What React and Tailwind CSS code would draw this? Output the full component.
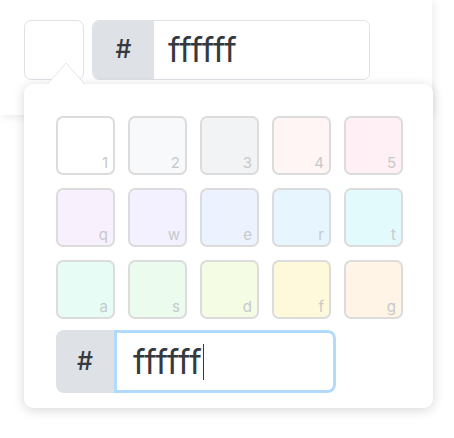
import React from "react";

const swatches = [
  ["#ffffff", "1"], ["#f8f9fa", "2"], ["#f1f3f5", "3"], ["#fff5f5", "4"], ["#fff0f6", "5"],
  ["#f8f0fc", "q"], ["#f3f0ff", "w"], ["#edf2ff", "e"], ["#e7f5ff", "r"], ["#e3fafc", "t"],
  ["#e6fcf5", "a"], ["#ebfbee", "s"], ["#f4fce3", "d"], ["#fff9db", "f"], ["#fff4e6", "g"],
];

export default function App() {
  return (
    <div className="relative w-[454px] h-[438px] bg-white overflow-hidden font-['Inter',sans-serif]">
      <div className="w-[432px] h-[115px] bg-white shadow-[2px_2px_8px_rgba(0,0,0,0.08)] flex items-start gap-[8px] pt-5 pl-6">
        <div className="w-[60px] h-[60px] rounded-[7px] border-[1.5px] border-[#dee2e6] bg-white" />
        <div className="w-[278px] h-[60px] rounded-[7px] border-[1.5px] border-[#dee2e6] flex overflow-hidden">
          <div className="w-[61px] bg-[#dee1e6] flex items-center justify-center text-[25px] font-medium text-[#343a40]">#</div>
          <div className="flex-1 bg-white flex items-center pl-[14px] text-[34px] leading-none text-[#343a40]">ffffff</div>
        </div>
      </div>

      <div className="absolute left-6 top-[84px] w-[409px] h-[324px] rounded-[9px] bg-white shadow-[0_2px_12px_rgba(0,0,0,0.16)] pt-8 pl-8">
        <svg className="absolute left-[23px] top-[-22px]" width="38" height="24" viewBox="0 0 38 24">
          <path d="M0 23 L19 1 L38 23 Z" fill="#ffffff" />
          <path d="M0 22.5 L19 1 L38 22.5" fill="none" stroke="#e3e5e8" strokeWidth="1" />
        </svg>
        <div className="grid grid-cols-[repeat(5,59px)] gap-[13px]">
          {swatches.map(([c, k]) => (
            <div
              key={k}
              className="relative w-[59px] h-[59px] rounded-[7px] border-[2px] border-[#dcdcdc]"
              style={{ backgroundColor: c }}
            >
              <span className="absolute right-[5px] bottom-[3px] text-[15px] leading-none text-[#c6c9cc]">{k}</span>
            </div>
          ))}
        </div>
        <div className="mt-[11px] w-[280px] h-[63px] flex rounded-[8px] overflow-hidden">
          <div className="w-[58px] bg-[#dee1e6] flex items-center justify-center text-[25px] font-medium text-[#343a40]">#</div>
          <div className="flex-1 bg-white border-[3px] border-[#b2dafc] rounded-r-[8px] flex items-center pl-[16px] text-[34px] leading-none text-[#343a40]">
            ffffff<span className="inline-block w-[1.5px] h-[36px] bg-[#343a40] ml-[1px]" />
          </div>
        </div>
      </div>
    </div>
  );
}
